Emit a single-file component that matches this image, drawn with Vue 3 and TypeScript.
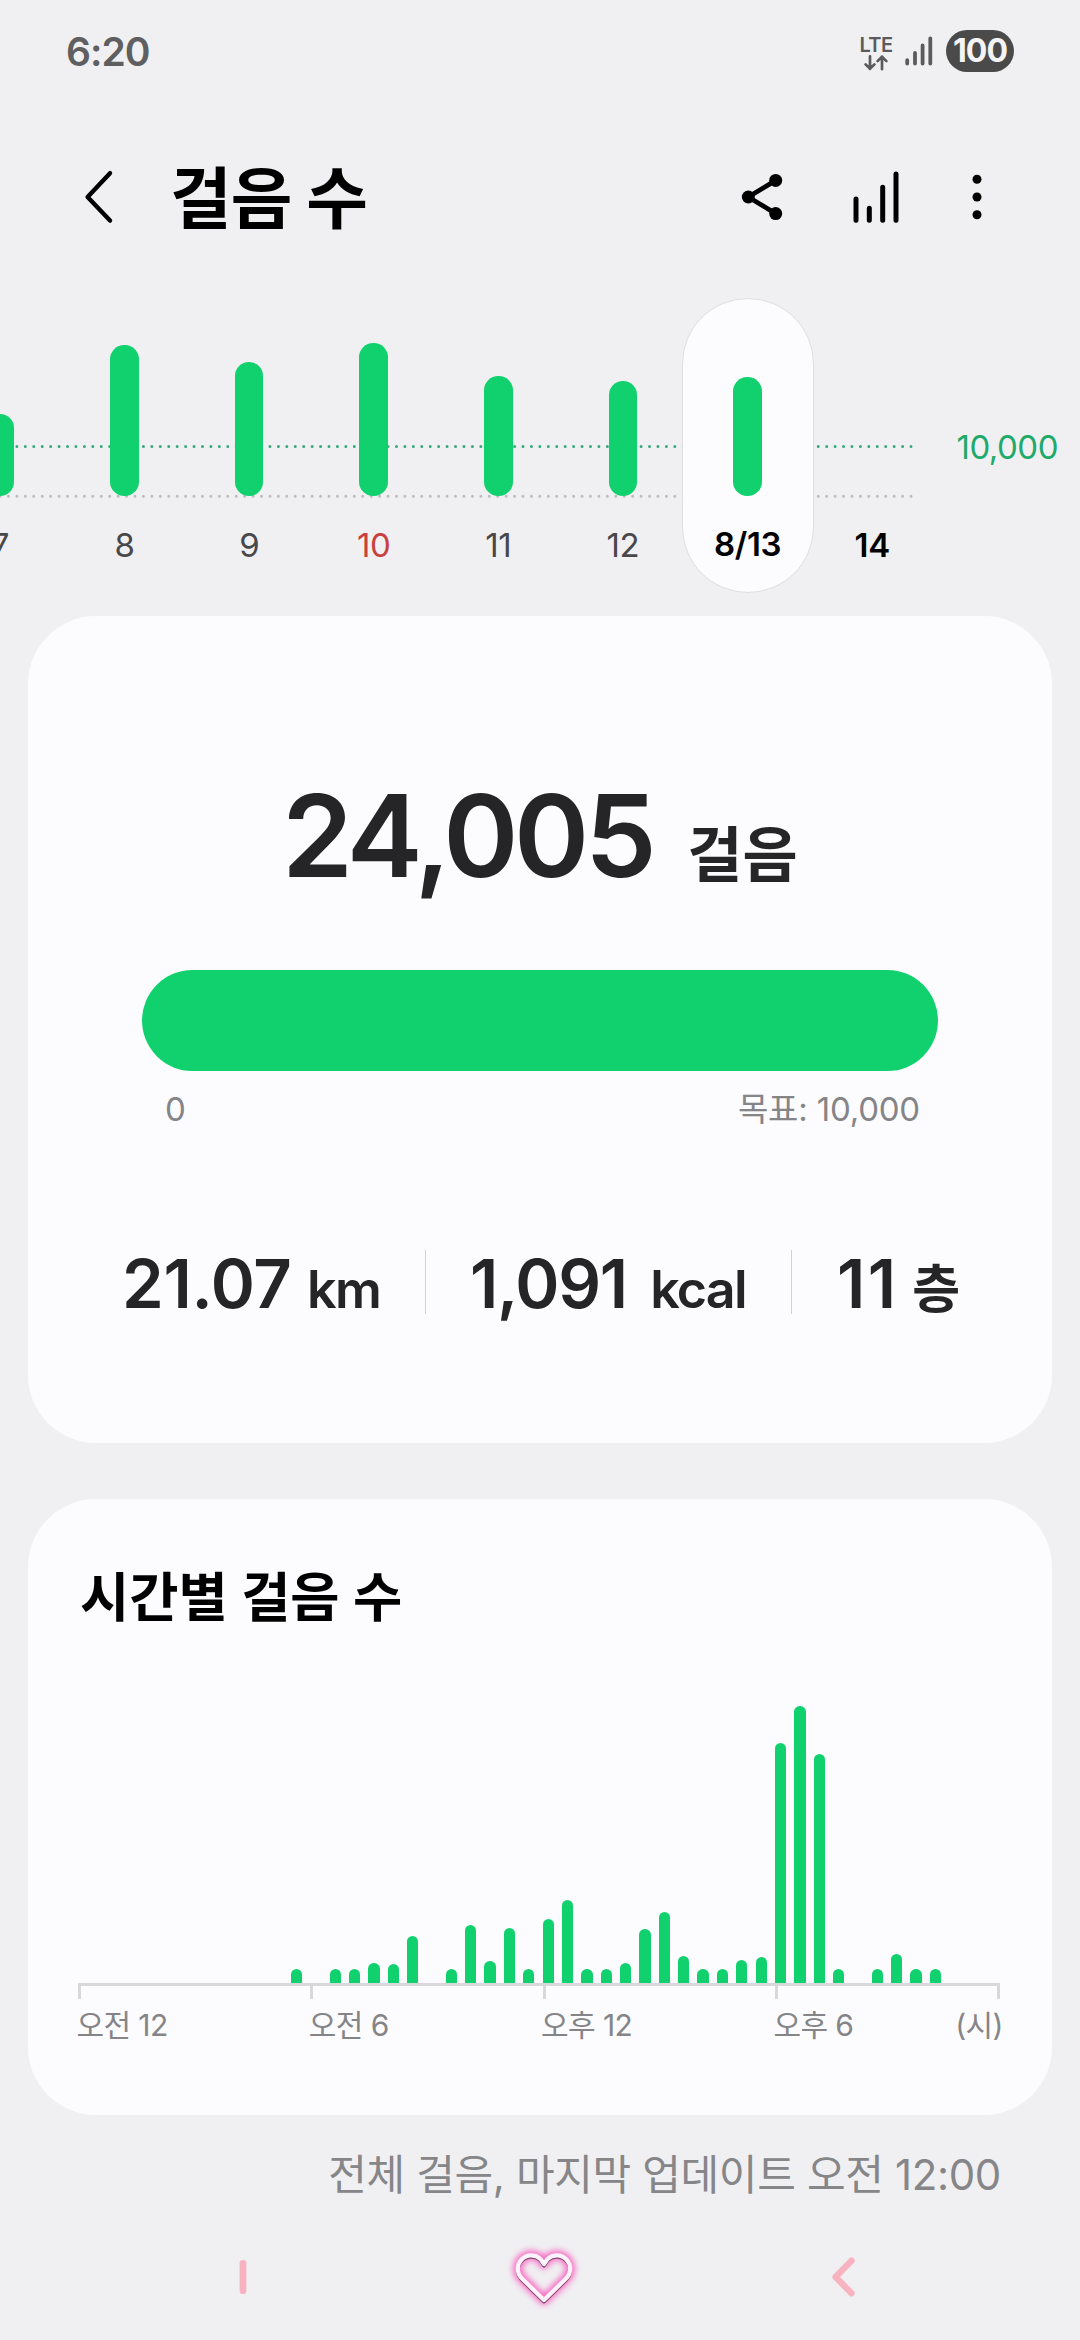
<script setup lang="ts">
interface Day {
  label: string
  height: number
  tone?: 'holiday' | 'strong'
  selected?: boolean
}

const days: Day[] = [
  { label: '7', height: 82 },
  { label: '8', height: 151 },
  { label: '9', height: 134 },
  { label: '10', height: 153, tone: 'holiday' },
  { label: '11', height: 120 },
  { label: '12', height: 115 },
  { label: '8/13', height: 119, tone: 'strong', selected: true },
  { label: '14', height: 0, tone: 'strong' },
]

// One value per half hour, midnight to midnight
const slots: number[] = [
  0, 0, 0, 0, 0, 0, 0, 0, 0, 0, 0, 14.3,
  0, 14.3, 14.3, 20.3, 19, 47.3, 0, 14.3, 58, 22.3, 55.3, 14.3,
  64, 82.7, 14.3, 14.3, 20, 54, 71.3, 27.3, 14.3, 14.3, 23, 26.3,
  240, 277, 228.7, 14.3, 0, 14.3, 29.3, 14.3, 14.3, 0, 0, 0,
]

const hours = ['오전 12', '오전 6', '오후 12', '오후 6']
</script>

<template>
  <div class="screen">
    <header class="status">
      <span class="clock">6:20</span>
      <div class="status-icons">
        <div class="lte">
          <span class="lte-text">LTE</span>
          <svg width="24" height="16" viewBox="0 0 24 16">
            <path d="M6 1.3V14M1.6 9.4L6 13.8L10.4 9.4M18 14.2V1.6M13.6 6.1L18 1.7L22.4 6.1" fill="none" stroke="#5b5b5d" stroke-width="2.7" stroke-linecap="round" stroke-linejoin="round" />
          </svg>
        </div>
        <svg class="signal" width="28" height="30" viewBox="0 0 28 30">
          <path d="M2.2 24.2V27.6M10 17V27.6M17.6 9.5V27.6M25.3 2.3V27.6" fill="none" stroke="#5b5b5d" stroke-width="3.8" stroke-linecap="round" />
        </svg>
        <span class="battery">100</span>
      </div>
    </header>

    <div class="toolbar">
      <svg class="back" width="32" height="56" viewBox="0 0 32 56">
        <path d="M27 4.2L4.6 28L27 51.6" fill="none" stroke="#000" stroke-width="4.4" stroke-linecap="round" stroke-linejoin="round" />
      </svg>
      <h1>걸음 수</h1>
      <svg class="share" width="42" height="48" viewBox="0 0 42 48">
        <path d="M34.7 7.4L7.3 24L34.7 40.6" fill="none" stroke="#000" stroke-width="4.8" />
        <circle cx="34.7" cy="7.4" r="6.5" />
        <circle cx="7.3" cy="24" r="6.5" />
        <circle cx="34.7" cy="40.6" r="6.5" />
      </svg>
      <svg class="stats-icon" width="46" height="52" viewBox="0 0 46 52">
        <path d="M3 28V49.2M16.3 37.2V49.2M29.7 16.3V49.2M43 3V49.2" fill="none" stroke="#000" stroke-width="5" stroke-linecap="round" />
      </svg>
      <svg class="more" width="10" height="46" viewBox="0 0 10 46">
        <circle cx="5" cy="5.3" r="4.5" />
        <circle cx="5" cy="23" r="4.5" />
        <circle cx="5" cy="40.7" r="4.5" />
      </svg>
    </div>

    <section class="week">
      <svg class="guides" width="920" height="324" viewBox="0 0 920 324">
        <path d="M8.47 154.4H913" stroke="#35ab7b" />
        <path d="M.03 204.2H913" stroke="#bcbcbf" />
      </svg>
      <div v-for="d in days" :key="d.label" class="day" :class="[d.tone, { selected: d.selected }]">
        <div class="track"><i v-if="d.height" :style="{ height: d.height + 'px' }" /></div>
        <span>{{ d.label }}</span>
      </div>
      <span class="goal">10,000</span>
    </section>

    <section class="card summary">
      <div class="total"><b>24,005</b><em>걸음</em></div>
      <div class="progress" />
      <div class="range"><span>0</span><span>목표: 10,000</span></div>
      <div class="metrics">
        <div class="metric distance"><b>21.07</b><em>km</em></div>
        <div class="metric energy"><b>1,091</b><em>kcal</em></div>
        <div class="metric floors"><b>11</b><em>층</em></div>
      </div>
    </section>

    <section class="card hourly">
      <h2>시간별 걸음 수</h2>
      <div class="plot">
        <div v-for="(v, i) in slots" :key="i" class="slot"><i v-if="v" :style="{ height: v + 'px' }" /></div>
      </div>
      <div class="axis">
        <div v-for="h in hours" :key="h" class="tick"><span>{{ h }}</span></div>
        <span class="unit">(시)</span>
      </div>
    </section>

    <p class="updated">전체 걸음, 마지막 업데이트 오전 12:00</p>

    <nav class="nav">
      <svg class="recents" width="8" height="36" viewBox="0 0 8 36">
        <path d="M4 4.3V31.7" stroke="#f8b3c1" stroke-width="6.8" stroke-linecap="round" />
      </svg>
      <svg class="heart" width="84" height="80" viewBox="0 0 84 80">
        <defs>
          <filter id="glow" x="-30%" y="-30%" width="160%" height="160%"><feGaussianBlur stdDeviation="3.4" /></filter>
          <filter id="shade" x="-30%" y="-30%" width="160%" height="160%"><feGaussianBlur stdDeviation="0.7" /></filter>
          <path id="heart-line" d="M42 63L64 41.5A13.4 13.4 0 0 0 45.5 22L42 27L38.5 22A13.4 13.4 0 0 0 20 41.500Z" fill="none" stroke-linejoin="round" />
        </defs>
        <use href="#heart-line" stroke="#f768c2" stroke-width="9.500" filter="url(#glow)" />
        <use href="#heart-line" y="1.700" stroke="#7d4a6c" stroke-width="3.600" filter="url(#shade)" />
        <use href="#heart-line" stroke="#fff3fb" stroke-width="4.200" />
      </svg>
      <svg class="nav-back" width="28" height="44" viewBox="0 0 28 44">
        <path d="M21.500 5.700L5.600 22L21.500 38.300" fill="none" stroke="#f8b3c1" stroke-width="6.400" stroke-linecap="round" stroke-linejoin="round" />
      </svg>
    </nav>
  </div>
</template>

<style>
body {
  background: #f0f0f2;
}
</style>

<style scoped>
.screen {
  width: 1080px;
  height: 2340px;
  overflow: hidden;
  display: flex;
  flex-direction: column;
  background: #f0f0f2;
  color: #000;
  font-family: Inter, "Noto Sans CJK KR", sans-serif;
}
em, i {
  font-style: normal;
}
svg {
  display: block;
  flex: none;
}

/* status bar */
.status {
  height: 102px;
  display: flex;
  align-items: center;
  justify-content: space-between;
  padding: 0 66px 0 66px;
}
.clock {
  font-size: 39px;
  font-weight: 600;
  letter-spacing: -1px;
  color: #5f5f61;
}
.status-icons {
  display: flex;
  align-items: center;
}
.lte {
  display: flex;
  flex-direction: column;
  align-items: center;
  width: 34px;
  margin-right: 12px;
  padding-top: 4px;
}
.lte-text {
  font-size: 20px;
  line-height: 20px;
  font-weight: 600;
  letter-spacing: -.6px;
  color: #5b5b5d;
}
.signal {
  margin-right: 13px;
}
.battery {
  width: 68px;
  height: 42px;
  border-radius: 21px;
  background: #4a4a4b;
  color: #f4f4f6;
  font-size: 32px;
  line-height: 41px;
  font-weight: 650;
  letter-spacing: -1px;
  text-align: center;
}

/* toolbar */
.toolbar {
  height: 190px;
  display: flex;
  align-items: center;
  padding-left: 83px;
}
h1 {
  margin: 0 0 0 55px;
  padding-top: 3px;
  width: 571px;
  font-size: 67px;
  line-height: 80px;
  font-weight: 700;
  letter-spacing: -1px;
}
.stats-icon {
  margin-left: 70px;
}
.more {
  margin-left: 73px;
}

/* week strip */
.week {
  position: relative;
  height: 324px;
  display: flex;
}
.guides {
  position: absolute;
  left: 0;
  top: 0;
}
.guides path {
  fill: none;
  stroke-width: 3;
  stroke-linecap: round;
  stroke-dasharray: 0 8.435;
}
.day {
  position: relative;
  flex: none;
  width: 124.6px;
  display: flex;
  flex-direction: column;
  align-items: center;
}
.day:nth-of-type(1) {
  margin-left: -62.3px;
}
.track {
  position: relative;
  height: 204px;
  display: flex;
  align-items: flex-end;
}
.track i {
  width: 28.6px;
  border-radius: 14.3px;
  background: #11d16e;
}
.day span {
  position: relative;
  font-size: 33px;
  line-height: 99px;
  letter-spacing: -.4px;
  color: #48484b;
}
.day.holiday span {
  color: #c8403f;
}
.day.strong span {
  color: #000;
  font-weight: 560;
}
.day.selected span {
  line-height: 96px;
}
.day.selected::before {
  content: "";
  position: absolute;
  box-sizing: border-box;
  left: -3.500px;
  top: 6px;
  width: 132px;
  height: 295px;
  border: 1.500px solid #dedee0;
  border-radius: 66px;
  background: #fcfcfe;
}
.goal {
  margin-left: 22px;
  padding-top: 105px;
  font-size: 33px;
  line-height: 100px;
  letter-spacing: -.5px;
  color: #1eaa6a;
}

/* cards */
.card {
  margin: 0 28px;
  background: #fcfcfe;
  border-radius: 68px;
}
.summary {
  height: 827px;
  box-sizing: border-box;
  padding-top: 159px;
  color: #252528;
}
.total {
  height: 121px;
  display: flex;
  align-items: baseline;
  padding-left: 254px;
}
.total b {
  font-size: 114px;
  line-height: 121px;
  font-weight: 600;
  letter-spacing: -4.400px;
}
.total em {
  margin-left: 35px;
  font-size: 60px;
  font-weight: 600;
}
.progress {
  height: 101px;
  margin: 74px 114px 0;
  border-radius: 51px;
  background: #11d16e;
}
.range {
  display: flex;
  justify-content: space-between;
  padding: 0 132px 0 137px;
  font-size: 33px;
  line-height: 76px;
  letter-spacing: -.2px;
  color: #858588;
}
.metrics {
  display: flex;
  height: 64px;
  margin-top: 103px;
}
.metric {
  box-sizing: border-box;
  display: flex;
  align-items: baseline;
  line-height: 67px;
  font-weight: 600;
}
.metric b {
  font-size: 67px;
  font-weight: 600;
}
.metric em {
  font-size: 52px;
  letter-spacing: -1.800px;
}
.distance {
  width: 398px;
  padding-left: 94px;
  border-right: 1px solid #d2d2d5;
}
.distance b {
  letter-spacing: -.3px;
  margin-right: 15.500px;
}
.energy {
  width: 366px;
  padding-left: 44px;
  border-right: 1px solid #d2d2d5;
}
.energy b {
  letter-spacing: -1.300px;
  margin-right: 23.500px;
}
.floors {
  padding-left: 45px;
}
.floors b {
  letter-spacing: 2.500px;
  margin-right: 13.500px;
}

/* hourly chart */
.hourly {
  margin-top: 56px;
  height: 616px;
}
h2 {
  margin: 0;
  padding: 63px 0 0 52px;
  font-size: 53.500px;
  line-height: 72px;
  font-weight: 600;
}
.plot {
  display: flex;
  align-items: flex-end;
  height: 349px;
  margin-left: 45.900px;
}
.slot {
  width: 19.370px;
  display: flex;
  justify-content: center;
}
.slot i {
  width: 11.300px;
  border-radius: 5.700px 5.700px 0 0;
  background: #11d16e;
}
.axis {
  display: flex;
  box-sizing: border-box;
  width: 922px;
  margin-left: 50px;
  border-top: 3px solid #d8d8db;
  background: linear-gradient(#d8d8db, #d8d8db) right top / 3px 13px no-repeat;
  font-size: 30px;
  line-height: 40px;
  letter-spacing: -.6px;
  color: #858588;
}
.tick {
  flex: none;
  width: 232.300px;
  padding-top: 19px;
  background: linear-gradient(#d8d8db, #d8d8db) left top / 3px 13px no-repeat;
}
.tick span {
  margin-left: -1.500px;
}
.unit {
  margin-left: -52px;
  padding-top: 19px;
}

.updated {
  margin: 0;
  padding: 30px 79px 2px 0;
  text-align: right;
  font-size: 42px;
  line-height: 60px;
  letter-spacing: -.35px;
  color: #868689;
}

/* navigation */
.nav {
  display: flex;
  align-items: center;
  height: 84px;
  margin-top: 28px;
  padding-left: 238.500px;
}
.heart {
  margin-left: 255.500px;
}
.nav-back {
  margin-left: 244px;
}
</style>
